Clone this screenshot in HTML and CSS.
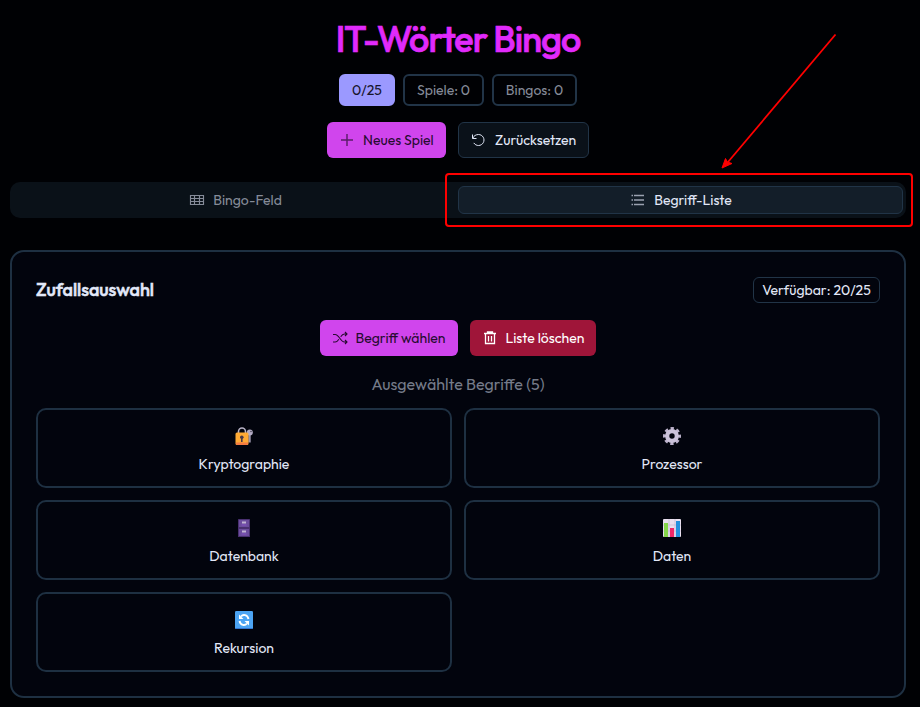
FILE: index.html
```html
<!DOCTYPE html>
<html lang="de">
<head>
<meta charset="utf-8">
<title>IT-Wörter Bingo</title>
<link rel="stylesheet" href="styles.css">
</head>
<body>
<main class="page">
  <h1 class="title">IT-Wörter Bingo</h1>
  <div class="stats">
    <span class="stat stat-progress">0/25</span>
    <span class="stat stat-games">Spiele: 0</span>
    <span class="stat stat-bingos">Bingos: 0</span>
  </div>
  <div class="actions">
    <button class="btn btn-primary btn-new">
      <svg class="icon faded" viewBox="0 0 16 16"><path d="M8 2v12M2 8h12"/></svg><span>Neues Spiel</span>
    </button>
    <button class="btn btn-outline btn-reset">
      <svg class="icon" viewBox="0 0 16 16"><path d="M1.500 2.500V6.500H5.500M1.800 6.200C2.800 3.800 5 2.500 7.500 2.500a5.500 5.500 0 1 1-4.700 8.400"/></svg><span>Zurücksetzen</span>
    </button>
  </div>
  <nav class="tabs">
    <button class="tab tab-first"><svg class="icon icon-table" viewBox="0 0 16 16"><path d="M1.500 3.500h13v9h-13zM1.500 6.500h13M1.500 9.500h13M5.500 3.500v9M10.500 3.500v9"/></svg><span>Bingo-Feld</span></button>
    <button class="tab tab-active"><svg class="icon icon-list" viewBox="0 0 16 16"><path d="M4 3.500h10M4 8h10M4 12.500h10M1.500 3.500h1.500M1.500 8h1.500M1.500 12.500h1.500"/></svg><span>Begriff-Liste</span></button>
    <span class="highlight"></span>
    <svg class="arrow" viewBox="0 0 120 140"><path class="arrow-line" d="M115.500 4.500L8 132"/><path class="arrow-head" d="M2 138L5.500 128.500l2 3.500 4.500 1.500z"/></svg>
  </nav>
  <section class="card">
    <header class="card-head">
      <h2>Zufallsauswahl</h2>
      <span class="available">Verfügbar: 20/25</span>
    </header>
    <div class="actions">
      <button class="btn btn-primary btn-pick">
        <svg class="icon icon-shuffle" viewBox="0 0 16 16"><path d="M1 4.500h2.200c3.800 0 5.400 7.500 9.200 7.500H15M1 12h2.200c1.500 0 2.700-1.300 3.700-2.800M8.700 6.800c1-1.600 2.200-2.800 3.700-2.800H15M13 2l2 2-2 2M13 10l2 2-2 2"/></svg><span>Begriff wählen</span>
      </button>
      <button class="btn btn-danger btn-clear">
        <svg class="icon icon-trash" viewBox="0 0 16 16"><path d="M2 3.500h12M5.500 3V2h5v1M3.500 4v9.500h9V4M6.500 6v5.500M9.500 6v5.500"/></svg><span>Liste löschen</span>
      </button>
    </div>
    <p class="caption">Ausgewählte Begriffe (5)</p>
    <div class="grid">
      <article class="term">
        <svg class="picto" viewBox="0 0 20 20">
          <path d="M4.500 9V5.500a3.500 3.500 0 0 1 7 0V9" fill="none" stroke="#b8b2c6" stroke-width="1.600"/>
          <path d="M15.500 7v9.500" stroke="#9c95ad" stroke-width="2.400"/>
          <circle cx="15.800" cy="6.500" r="3" fill="#b3acc5"/><circle cx="17" cy="5.500" r=".8" fill="#4b4858"/>
          <rect x="1.500" y="6.500" width="13" height="12.500" rx="1.500" fill="#ffaa35"/>
          <path d="M2 16.500h12V18l-1 1H3l-1-1z" fill="#f57b42"/>
          <circle cx="7.800" cy="11.300" r="1.800" fill="#493848"/><path d="M7 12h1.600v4H7z" fill="#493848"/>
        </svg><span>Kryptographie</span>
      </article>
      <article class="term">
        <svg class="picto" viewBox="0 0 20 20">
          <circle cx="10" cy="10" r="7.300" fill="none" stroke="#bdb3cc" stroke-width="3.400" stroke-dasharray="3.200 2.533" stroke-dashoffset="1.600"/>
          <circle cx="10" cy="10" r="4.800" fill="none" stroke="#cbc2d9" stroke-width="4.200"/>
        </svg><span>Prozessor</span>
      </article>
      <article class="term">
        <svg class="picto" viewBox="0 0 20 20">
          <rect x="4" y="1" width="12" height="18" rx=".6" fill="#493070"/>
          <path d="M5 2h10v7H5zM5 11h10v7H5z" fill="#6b4d9d"/>
          <path d="M8 3.500h4v2H8zM8 12.500h4v2H8z" fill="#c0b3d4"/><path d="M7.500 7h5M7.500 16h5" stroke="#8353c0"/>
        </svg><span>Datenbank</span>
      </article>
      <article class="term">
        <svg class="picto" viewBox="0 0 20 20">
          <rect x="1" y="1" width="18" height="18" rx="1" fill="#e9e0ef"/>
          <path d="M1 7h18M1 13h18M7 1v18M13 1v18" stroke="#c5b7d2" stroke-width=".7"/>
          <path d="M2 5h4v14H2z" fill="#85d64a"/><path d="M8 10h4v9H8z" fill="#ee2868"/><path d="M14 3h4v16h-4z" fill="#2392df"/>
        </svg><span>Daten</span>
      </article>
      <article class="term">
        <svg class="picto" viewBox="0 0 20 20">
          <rect x="1" y="1" width="18" height="18" rx="1.300" fill="#4ca4f3"/><path d="M1.500 18.500h17" stroke="#3274d0"/>
          <path d="M14.500 9C13.500 4.500 9 4 7 6.500M5.500 11c1 4.500 5.500 5 7.500 2.500" fill="none" stroke="#fff" stroke-width="1.900"/>
          <path d="M5 4.500V9h4.500zM15 15.500V11h-4.500z" fill="#fff"/>
        </svg><span>Rekursion</span>
      </article>
    </div>
  </section>
</main>
</body>
</html>
```
FILE: styles.css
```css
* { box-sizing: border-box; }
body { margin: 0; background: #000104; color: #e2e8f8; font-family: Outfit, Lato, "Open Sans", sans-serif; font-size: 14px; }
h1, h2, p { margin: 0; }
button { font: inherit; color: inherit; border: 0; padding: 0; }
.page { width: 896px; margin-left: 10px; padding-top: 20px; height: 707px; }
.title { height: 40px; font-size: 36px; line-height: 38px; font-weight: 500; letter-spacing: -.92px; color: #e12afb; -webkit-text-stroke: .7px #e12afb; text-align: center; }
.stats { display: flex; justify-content: center; gap: 8px; margin-top: 14px; }
.stat { height: 32px; border: 2px solid #213447; border-radius: 6px; line-height: 28px; text-align: center; color: #858b98; white-space: nowrap; }
.stat-progress { width: 56px; background: #9b99ff; border-color: #9b99ff; color: #17152c; }
.stat-games { width: 81px; }
.stat-bingos { width: 85px; }
.actions { display: flex; justify-content: center; gap: 12px; margin-top: 16px; }
.btn { height: 36px; border-radius: 6px; display: flex; align-items: center; padding-left: 12px; gap: 8px; white-space: nowrap; }
.btn-primary { background: #d045ed; color: #260b30; }
.btn-outline { background: #0a1119; border: 1px solid #213447; font-weight: 450; }
.btn-danger { background: #9f1539; color: #fff; font-weight: 450; }
.btn-new { width: 119px; }
.btn-reset { width: 131px; }
.btn-pick { width: 138px; gap: 7.5px; }
.btn-clear { width: 126px; gap: 7.5px; }
.icon { width: 16px; height: 16px; fill: none; stroke: currentColor; stroke-width: 1; flex: none; }
.icon-trash { stroke-width: 1.3; }
.icon-list { stroke-width: 1.4; }
.icon-table { stroke-width: 1.15; }
.icon-shuffle { stroke-width: 1.1; }
.faded { opacity: .7; stroke-width: 1.4; }
.tabs { position: relative; display: grid; grid-template-columns: 444px 445px; height: 36px; margin-top: 24px; padding: 4px 3px 4px 4px; border-radius: 10px; background: #0a1118; }
.tab { display: flex; align-items: center; justify-content: center; gap: 8px; border: 1px solid transparent; border-radius: 6px; background: none; color: #858b98; height: 28px; }
.tab-first { padding-right: 1px; }
.tab-active { padding-left: 1px; background: #131e29; border-color: #213447; color: #e2e8f8; font-weight: 450; }
.tab-active .icon { opacity: .65; }
.highlight { position: absolute; left: 435px; top: -9.500px; width: 468px; height: 54px; border: 2px solid #f00; border-radius: 4px; }
.arrow { position: absolute; left: 710px; top: -152px; width: 120px; height: 140px; }
.arrow-line { stroke: #f00; stroke-width: 1.8; }
.arrow-head { fill: #f00; stroke: #f00; stroke-width: 1; }
.card { height: 448px; margin-top: 32px; border: 2px solid #1e3042; border-radius: 14px; padding: 24px; background: #02040d; }
.card-head { display: flex; justify-content: space-between; align-items: center; height: 28px; }
.card-head h2 { font-size: 18px; line-height: 24px; font-weight: 500; letter-spacing: -.05px; -webkit-text-stroke: .5px #e2e8f8; }
.available { width: 127px; height: 26px; border: 1px solid #213447; border-radius: 6px; text-align: center; line-height: 24px; font-weight: 450; white-space: nowrap; }
.caption { margin-top: 16px; height: 24px; line-height: 24px; font-size: 16px; text-align: center; color: #757b89; }
.grid { display: grid; grid-template-columns: 416px 416px; grid-auto-rows: 80px; gap: 12px; margin-top: 12px; }
.term { display: flex; flex-direction: column; align-items: center; border: 2px solid #1e3042; border-radius: 10px; padding-top: 16px; font-weight: 450; line-height: 20px; }
.picto { width: 20px; height: 20px; margin-bottom: 8px; }
```
